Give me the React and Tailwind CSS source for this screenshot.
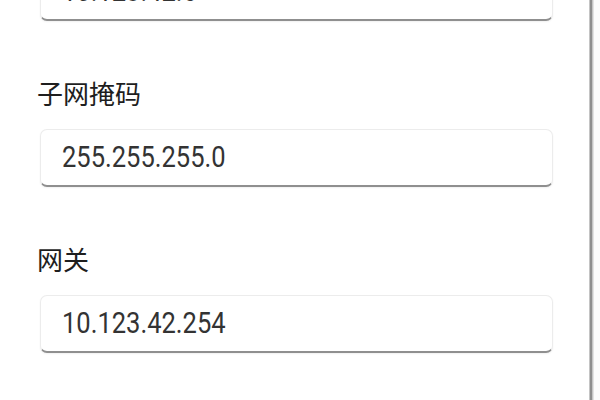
import React from 'react';

const fields = [
  { label: null, value: '10.123.42.6' },
  { label: '子网掩码', value: '255.255.255.0' },
  { label: '网关', value: '10.123.42.254' },
];

const Field = ({ label, value }) => (
  <div className="flex flex-col">
    {label && (
      <div className="mt-[54px] mb-[18px] h-[36px] pl-[37px] text-[26px] leading-[36px] text-[#1e1e1e] font-['Noto_Sans_CJK_SC',sans-serif]">
        {label}
      </div>
    )}
    <div className="ml-[40px] w-[513px] h-[58px] flex items-center rounded-[7px] border border-[#ececec] border-b-2 border-b-[#8f8f8f] bg-white pl-[21px] shadow-[0_1px_2px_rgba(0,0,0,0.06)]">
      <span className="origin-left scale-x-[0.88] whitespace-nowrap text-[29px] leading-none text-[#333] font-['Roboto','Noto_Sans',sans-serif]">
        {value}
      </span>
    </div>
  </div>
);

export default function App() {
  return (
    <div className="w-[600px] h-[400px] overflow-hidden bg-white flex">
      <div className="w-[589px] -mt-[37px] flex flex-col">
        {fields.map((f, i) => (
          <Field key={i} label={f.label} value={f.value} />
        ))}
      </div>
      {/* window edge */}
      <div className="w-[4px] h-full bg-[#8e8e8e] border-x border-[#c4c4c4]" />
      <div className="flex-1 h-full bg-[#fbfbfb] border-l border-[#e2e2e2]" />
    </div>
  );
}
